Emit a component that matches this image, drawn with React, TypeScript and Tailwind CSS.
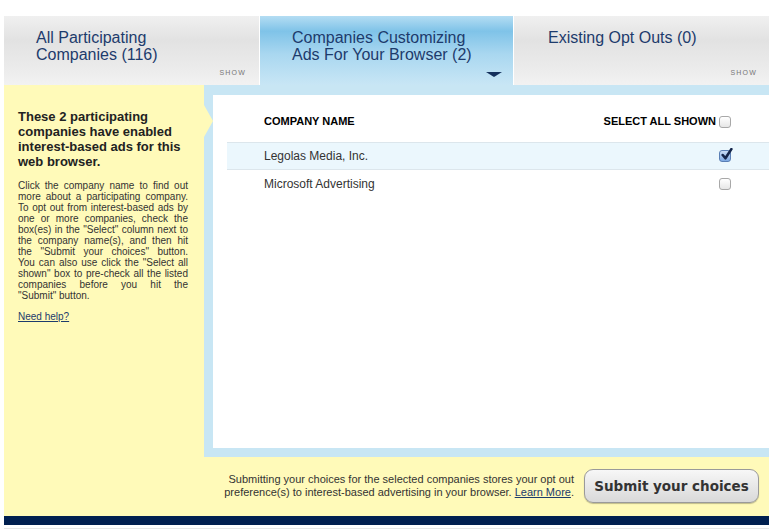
import React from "react";

const companies = [
  { name: "Legolas Media, Inc.", checked: true },
  { name: "Microsoft Advertising", checked: false },
];

const helpLines = [
  "Click the company name to find out",
  "more about a participating company.",
  "To opt out from interest-based ads by",
  "one or more companies, check the",
  'box(es) in the "Select" column next to',
  "the company name(s), and then hit",
  'the "Submit your choices" button.',
  'You can also use click the "Select all',
  'shown" box to pre-check all the listed',
  "companies before you hit the",
];

function Box({ checked = false }: { checked?: boolean }) {
  if (checked) {
    return (
      <span className="relative inline-block h-[12px] w-[12px] rounded-[3px] border border-[#5a7fb5] bg-gradient-to-b from-[#c9dcf5] to-[#7ea9e2]">
        <svg viewBox="0 0 12 12" className="absolute -top-[3px] left-[0px] h-[13px] w-[13px]">
          <path d="M2.5 6.5 L5 9.5 L10.5 1" fill="none" stroke="#14254a" strokeWidth="2.4" strokeLinecap="round" strokeLinejoin="round" />
        </svg>
      </span>
    );
  }
  return (
    <span className="inline-block h-[12px] w-[12px] rounded-[3px] border border-[#a8a8a8] bg-gradient-to-b from-white to-[#e6e6e6]" />
  );
}

function Tab({ lines, active }: { lines: string[]; active?: boolean }) {
  return (
    <div
      className={`relative h-[69px] ${
        active
          ? "w-[253px] bg-[linear-gradient(#b4ddf3_0%,#7fc3e8_22%,#a9d7f0_55%,#c8e6f5_100%)] pl-[32px]"
          : "w-[255px] bg-[linear-gradient(#f0f0f0_0%,#e2e2e2_35%,#ebebeb_75%,#f2f2f2_100%)] pl-[32px]"
      }`}
    >
      <div className="pt-[14px] text-[16px] leading-[16.5px] text-[#1d3b6c]">
        {lines.map((l) => (
          <div key={l}>{l}</div>
        ))}
      </div>
      {active ? (
        <span className="absolute bottom-[8px] right-[11px] h-0 w-0 border-x-[8px] border-t-[5px] border-x-transparent border-t-[#14305c]" />
      ) : (
        <span className="absolute bottom-[7px] right-[13px] text-[7px] tracking-[1.2px] text-[#777]">SHOW</span>
      )}
    </div>
  );
}

export default function App() {
  return (
    <div className="h-[531px] w-[780px] overflow-hidden bg-white font-['Liberation_Sans',Arial,sans-serif]">
      <div className="ml-[4px] w-[765px] pt-[16px]">
        <div className="flex gap-px">
          <Tab lines={["All Participating", "Companies (116)"]} />
          <Tab lines={["Companies Customizing", "Ads For Your Browser (2)"]} active />
          <div className="relative h-[69px] w-[255px] bg-[linear-gradient(#f0f0f0_0%,#e2e2e2_35%,#ebebeb_75%,#f2f2f2_100%)] pl-[34px]">
            <div className="pt-[14px] text-[16px] leading-[16.5px] text-[#1d3b6c]">Existing Opt Outs (0)</div>
            <span className="absolute bottom-[7px] right-[12px] text-[7px] tracking-[1.2px] text-[#777]">SHOW</span>
          </div>
        </div>

        <div className="flex h-[431px] bg-[#fffab9]">
          <div className="w-[200px] pl-[14px] pr-[16px] pt-[24px]">
            <h2 className="text-[13px] font-bold leading-[15px] text-[#222]">
              These 2 participating companies have enabled interest-based ads for this web browser.
            </h2>
            <div className="mt-[11px] text-[10px] leading-[11px] text-[#333]">
              {helpLines.map((l) => (
                <div key={l} className="text-justify [text-align-last:justify]">
                  {l}
                </div>
              ))}
              <div>"Submit" button.</div>
            </div>
            <a href="#" className="mt-[8px] block text-[10px] text-[#1d3b6c] underline">
              Need help?
            </a>
          </div>

          <div className="flex flex-1 flex-col">
            <div className="relative h-[372px] bg-[#c8e6f4] pl-[9px] pt-[10px] pb-[9px]">
              <span className="absolute left-0 top-[20px] h-0 w-0 border-y-[16px] border-l-[9px] border-y-transparent border-l-[#fffab9]" />
              <div className="h-full bg-white pl-[14px]">
                <div className="flex h-[48px] items-center justify-between border-b border-[#dce6ec] pl-[37px] pr-[38px] pt-[6px] text-[11px] font-bold text-black">
                  <span>COMPANY NAME</span>
                  <span className="flex items-center gap-[3px]">
                    SELECT ALL SHOWN <Box />
                  </span>
                </div>
                {companies.map((c, i) => (
                  <div
                    key={c.name}
                    className={`flex h-[27px] items-center justify-between pl-[37px] pr-[38px] text-[12px] text-[#333] ${
                      i === 0 ? "border-b border-[#dce6ec] bg-[#ebf7fd]" : ""
                    }`}
                  >
                    <span>{c.name}</span>
                    <Box checked={c.checked} />
                  </div>
                ))}
              </div>
            </div>
            <div className="flex flex-1 items-center justify-end gap-[10px] pr-[10px] pb-[1px]">
              <p className="text-right text-[11px] leading-[13px] text-[#333]">
                Submitting your choices for the selected companies stores your opt out
                <br />
                preference(s) to interest-based advertising in your browser.{" "}
                <a href="#" className="text-[#1d3b6c] underline">
                  Learn More
                </a>
                .
              </p>
              <button className="h-[34px] w-[175px] rounded-[9px] border border-[#9a9a9a] bg-gradient-to-b from-[#f7f7f7] to-[#d9d9d9] font-['DejaVu_Sans',sans-serif] text-[13.5px] font-bold text-[#333] shadow-[0_1px_1px_rgba(0,0,0,0.25)]">
                Submit your choices
              </button>
            </div>
          </div>
        </div>
        <div className="h-[9px] bg-[#001f4f]" />
        <div className="mt-[3px] h-px bg-[#e6e6e6]" />
      </div>
    </div>
  );
}
